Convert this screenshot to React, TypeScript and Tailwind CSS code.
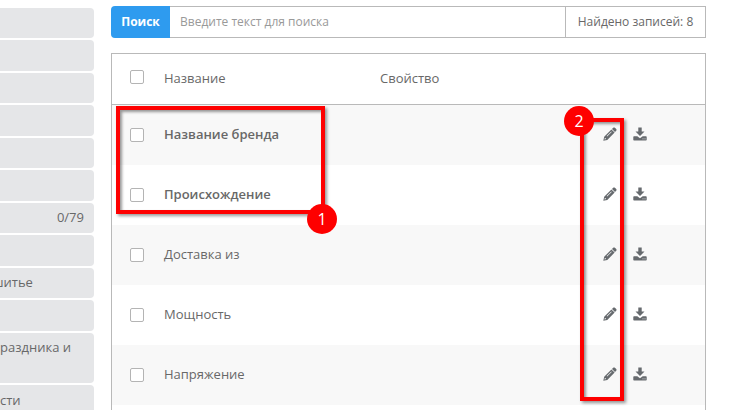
import { useState } from "react";

const categories = [
  { title: "", count: "" },
  { title: "", count: "" },
  { title: "", count: "" },
  { title: "", count: "" },
  { title: "", count: "" },
  { title: "", count: "" },
  { title: "", count: "0/79" },
  { title: "", count: "" },
  { title: "шитье", count: "" },
  { title: "", count: "" },
  { title: "раздника и", count: "", tall: true },
  { title: "сти", count: "" },
];

const properties = [
  { id: "brand", name: "Название бренда", required: true },
  { id: "origin", name: "Происхождение", required: true },
  { id: "shipping", name: "Доставка из", required: false },
  { id: "power", name: "Мощность", required: false },
  { id: "voltage", name: "Напряжение", required: false },
];

const checkboxClass =
  "block size-3.5 appearance-none rounded-xs border border-[#b4b4b4] bg-white checked:bg-[#2e9bef]";

function PencilIcon() {
  return (
    <svg viewBox="0 0 14 14" className="block size-3.5" aria-hidden="true">
      <path
        fill="#666a6e"
        fillRule="evenodd"
        d="M10.2.8c.5-.5 1.2-.5 1.7 0l1.3 1.3c.5.5.5 1.2 0 1.7L12 5 9 2zM8.4 2.4l3.200 3.200-7.300 7.300-4 .9.9-4zM8.300 4.500 3.700 9.100l.4.4 4.600-4.600zM1.900 10.900l-.4 1.600 1.600-.4-.3-.8-.7-.1z"
      />
    </svg>
  );
}

function DownloadIcon() {
  return (
    <svg viewBox="0 0 14 14" className="block size-3.5" aria-hidden="true">
      <path
        fill="#666a6e"
        fillRule="evenodd"
        d="M5.300.5h3.400V4.600H11.500L7 9.100 2.500 4.600h2.800zM1 9.300h3.300L7 11.200l2.700-1.900H13c.4 0 .7.3.7.7v2.800c0 .4-.3.7-.7.7H1c-.4 0-.7-.3-.7-.7V10c0-.4.3-.7.7-.7zm8.500 2.200v.8h1v-.8zm2 0v.8h1v-.8z"
      />
    </svg>
  );
}

export default function App() {
  const [query, setQuery] = useState("");

  return (
    <div className="flex h-screen gap-[17px] overflow-hidden bg-white pr-[34px] font-['Open_Sans','Noto_Sans',sans-serif] text-[13px] leading-5 text-[#686868]">
      <aside className="w-[94px] shrink-0 overflow-hidden pt-2">
        <ul className="flex flex-col gap-0.5">
          {categories.map((item, index) => (
            <li
              key={index}
              className={
                item.tall
                  ? "flex h-[50px] shrink-0 items-start justify-between rounded-r-sm bg-[#e5e6e8] py-1 pr-2.5 whitespace-nowrap"
                  : "flex shrink-0 items-center justify-between rounded-r-sm bg-[#e5e6e8] pr-2.5 pb-0.5 whitespace-nowrap odd:h-[30px] even:h-[31px]"
              }
            >
              <span className={item.title === "шитье" ? "-ml-2" : ""}>
                {item.title}
              </span>
              <span>{item.count}</span>
            </li>
          ))}
        </ul>
      </aside>

      <main className="min-w-0 flex-1 pt-1.5">
        <form
          className="flex h-8 text-xs"
          onSubmit={(e) => e.preventDefault()}
        >
          <button
            type="submit"
            className="w-[59px] shrink-0 rounded-l-sm bg-[#2e9bef] font-bold text-white"
          >
            Поиск
          </button>
          <input
            type="text"
            aria-label="Поиск"
            placeholder="Введите текст для поиска"
            value={query}
            onChange={(e) => setQuery(e.target.value)}
            className="min-w-0 flex-1 border-y border-[#b9b9b9] px-2.5 outline-none placeholder:text-[#999999]"
          />
          <div className="flex w-[141px] shrink-0 items-center justify-center border border-[#b9b9b9]">
            Найдено записей: 8
          </div>
        </form>

        <div className="relative mt-[15px] border border-[#b9b9b9]">
          <table className="w-full table-fixed border-separate border-spacing-0 text-left">
            <colgroup>
              <col className="w-[52px]" />
              <col className="w-[216px]" />
              <col />
              <col className="w-[102px]" />
            </colgroup>
            <thead>
              <tr className="h-[51px] *:border-b *:border-[#b9b9b9]">
                <th className="pb-1 pl-[18px]">
                  <input
                    type="checkbox"
                    aria-label="Выбрать все"
                    className={checkboxClass}
                  />
                </th>
                <th className="pb-0.5 font-normal">Название</th>
                <th className="pb-0.5 font-normal">Свойство</th>
                <td></td>
              </tr>
            </thead>
            <tbody>
              {properties.map((row) => (
                <tr key={row.id} className="h-[60px] odd:bg-[#f8f8f8]">
                  <td className="pl-[18px]">
                    <input
                      id={row.id}
                      type="checkbox"
                      className={checkboxClass}
                    />
                  </td>
                  <td className="pb-0.5">
                    <label
                      htmlFor={row.id}
                      className={row.required ? "font-semibold" : ""}
                    >
                      {row.name}
                    </label>
                  </td>
                  <td></td>
                  <td className="pb-0.5">
                    <div className="flex gap-4">
                      <button type="button" aria-label="Редактировать">
                        <PencilIcon />
                      </button>
                      <button type="button" aria-label="Скачать">
                        <DownloadIcon />
                      </button>
                    </div>
                  </td>
                </tr>
              ))}
              <tr className="h-[60px]">
                <td colSpan={4}></td>
              </tr>
            </tbody>
          </table>

          {/* callouts */}
          <div className="pointer-events-none absolute top-[52px] left-1 h-[108px] w-[209px] border-4 border-[#fe0000] shadow-[2px_2px_3px_rgba(0,0,0,0.4),inset_2px_2px_3px_rgba(0,0,0,0.4)]">
            <span className="absolute -right-4 -bottom-6 flex size-[30px] items-center justify-center rounded-full bg-[#fe0000] text-base text-white">
              1
            </span>
          </div>
          <div className="pointer-events-none absolute top-[64px] right-[81px] h-[283px] w-[44px] border-4 border-[#fe0000] shadow-[2px_2px_3px_rgba(0,0,0,0.4),inset_2px_2px_3px_rgba(0,0,0,0.4)]">
            <span className="absolute -top-4 -left-5 flex size-[30px] items-center justify-center rounded-full bg-[#fe0000] text-base text-white">
              2
            </span>
          </div>
        </div>
      </main>
    </div>
  );
}
